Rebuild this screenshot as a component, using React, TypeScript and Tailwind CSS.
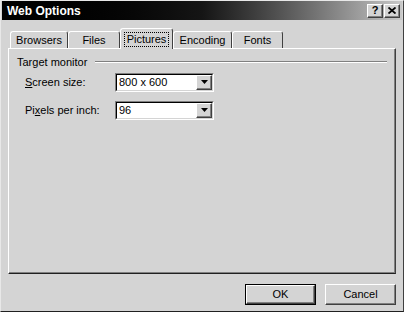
// WebOptionsDialog: classic Windows "Web Options" dialog, Pictures tab.

const raised =
  "border border-t-white border-l-white border-r-[#404040] border-b-[#404040] shadow-[inset_-1px_-1px_0_#808080]";

function TitleButton({ children }: { children: React.ReactNode }) {
  return (
    <div
      className={`flex h-[14px] w-[16px] items-center justify-center bg-[#d4d4d4] text-[11px] font-bold leading-none text-black ${raised}`}
    >
      {children}
    </div>
  );
}

function Tab({ label, width, active }: { label: string; width: string; active?: boolean }) {
  return (
    <div
      className={`relative flex items-center justify-center rounded-t-[3px] border-t border-l border-r border-t-white border-l-white border-r-[#404040] bg-[#d4d4d4] ${width} ${
        active ? "z-10 -mb-px h-[21px]" : "h-[17px]"
      }`}
    >
      {active ? (
        <span className="border border-dotted border-black px-[2px] leading-[13px]">{label}</span>
      ) : (
        <span className="leading-[13px]">{label}</span>
      )}
    </div>
  );
}

function Combo({ value }: { value: string }) {
  return (
    <div className="flex h-[19px] w-[99px] border border-t-[#808080] border-l-[#808080] border-r-white border-b-white">
      <div className="flex flex-1 border border-t-black border-l-black border-r-[#d4d4d4] border-b-[#d4d4d4] bg-white">
        <div className="flex flex-1 items-center pl-[2px]">{value}</div>
        <div className={`flex w-[16px] items-center justify-center bg-[#d4d4d4] ${raised}`}>
          <svg width="7" height="4" viewBox="0 0 7 4">
            <path d="M0 0h7L3.5 4z" fill="#000" />
          </svg>
        </div>
      </div>
    </div>
  );
}

function PushButton({ label, isDefault }: { label: string; isDefault?: boolean }) {
  return (
    <div className={`h-[21px] w-[71px] ${isDefault ? "border border-black" : ""}`}>
      <div className={`flex h-full w-full items-center justify-center bg-[#d4d4d4] ${raised}`}>{label}</div>
    </div>
  );
}

export default function App() {
  return (
    <div className="flex h-[312px] w-[404px] flex-col border border-t-[#e8e8e8] border-l-[#e8e8e8] border-r-[#404040] border-b-[#202020] bg-[#d4d4d4] font-['Liberation_Sans',Arial,sans-serif] text-[11px] text-black">
      <div className="mx-px flex h-[19px] items-center justify-between bg-gradient-to-r from-[#000000] via-[#151515] to-[#c8c8c8] pl-[5px] pr-[2px]">
        <span className="text-[12px] font-bold text-white">Web Options</span>
        <div className="flex gap-[1px]">
          <TitleButton>?</TitleButton>
          <TitleButton>
            <svg width="8" height="7" viewBox="0 0 8 7">
              <path d="M0.5 0.5l7 6M7.5 0.5l-7 6" stroke="#000" strokeWidth="1.8" />
            </svg>
          </TitleButton>
        </div>
      </div>

      <div className="mt-[8px] flex items-end pl-[9px]">
        <Tab label="Browsers" width="w-[58px]" />
        <Tab label="Files" width="w-[52px]" />
        <Tab label="Pictures" width="w-[53px]" active />
        <Tab label="Encoding" width="w-[59px]" />
        <Tab label="Fonts" width="w-[51px]" />
      </div>

      <div className="mx-[7px] h-[226px] border border-t-white border-l-white border-r-[#404040] border-b-[#202020] shadow-[inset_-1px_-1px_0_#808080] px-[8px] pt-[5px]">
        <div className="flex items-center gap-[8px]">
          <span>Target monitor</span>
          <div className="h-[2px] flex-1 border-t border-b border-t-[#808080] border-b-white" />
        </div>
        <div className="mt-[2px] flex flex-col gap-[9px] pl-[8px]">
          <div className="flex items-center">
            <span className="w-[90px]">
              <span className="underline">S</span>creen size:
            </span>
            <Combo value="800 x 600" />
          </div>
          <div className="flex items-center">
            <span className="w-[90px]">
              Pi<span className="underline">x</span>els per inch:
            </span>
            <Combo value="96" />
          </div>
        </div>
      </div>

      <div className="mt-[10px] flex justify-end gap-[9px] pr-[7px]">
        <PushButton label="OK" isDefault />
        <PushButton label="Cancel" />
      </div>
    </div>
  );
}
